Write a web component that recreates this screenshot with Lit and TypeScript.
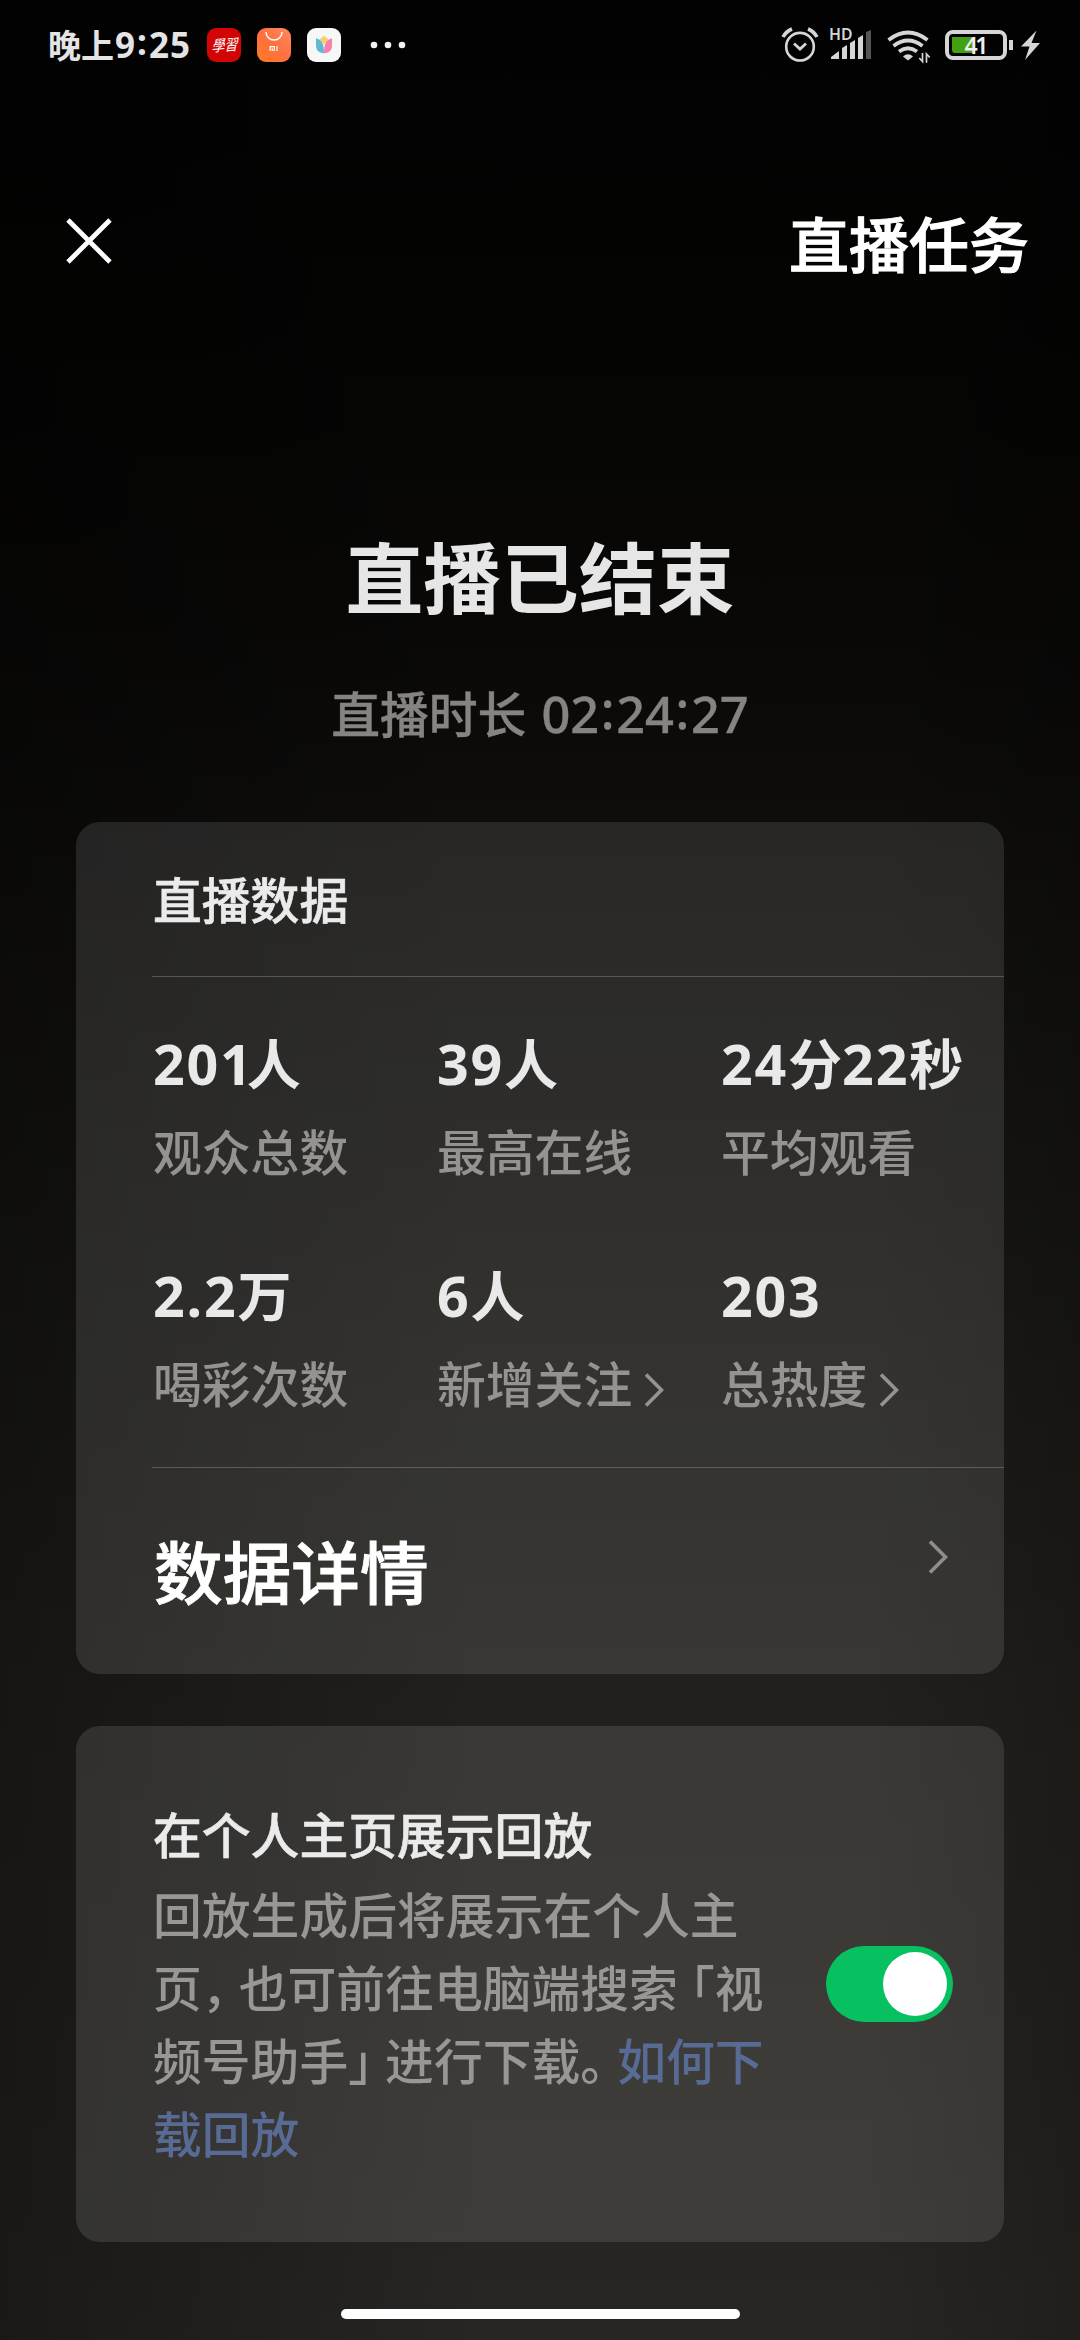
import { LitElement, html, css, svg } from "lit";
import { customElement, property } from "lit/decorators.js";

const chevron = (w: number, h: number, sw: number) => html`<svg width=${w} height=${h} viewBox="0 0 20 34" fill="none">
  ${svg`<path d="M2 1.5 17.5 17 2 32.5" stroke="currentColor" stroke-width=${sw} />`}
</svg>`;

@customElement("status-bar")
export class StatusBar extends LitElement {
  static styles = css`
    :host { display: flex; justify-content: space-between; height: 90px; padding: 0 40px 0 48px; color: #e4e4e4; box-sizing: border-box; }
    .left, .right { display: flex; align-items: center; }
    .time { font-size: 33px; font-weight: 700; line-height: 40px; white-space: nowrap; width: 159px; display: flex; align-items: baseline; }
    .digits { font-size: 35px; font-weight: 700; letter-spacing: 1px; margin-left: 1px; }
    .colon { position: relative; top: -3px; margin: 0 1px; }
    svg { display: block; flex: none; }
    .app { margin-right: 16px; }
    .brand { font-family: "Noto Sans CJK TC", sans-serif; font-weight: 400; }
    .level { font-family: "Noto Sans", sans-serif; font-weight: 600; }
  `;
  render() {
    return html`
      <div class="left">
        <div class="time"><span>晚上</span><span class="digits">9<span class="colon">:</span>25</span></div>
        <svg class="app" width="34" height="34" viewBox="0 0 34 34">
          <rect width="34" height="34" rx="9" fill="#d10505" />
          <text class="brand" transform="matrix(1 -.08 -.25 1.2 8.6 23.5)" x="-4" y="0" font-size="13" fill="#fff">學習</text>
        </svg>
        <svg class="app" width="34" height="34" viewBox="0 0 34 34">
          <defs><linearGradient id="shop" x1="0" y1="1" x2="1" y2="0"><stop offset="0" stop-color="#ff7a22" /><stop offset=".5" stop-color="#ff7040" /><stop offset="1" stop-color="#ff8a60" /></linearGradient></defs>
          <rect width="34" height="34" rx="9" fill="url(#shop)" />
          <path d="M9 4a8 8 0 0 0 16 0" fill="none" stroke="#fff" stroke-width="1.500" />
          <path d="M13.200 23v-4.300h4.100v4.300M15.300 20.500v2.500M20 18v5" fill="none" stroke="#fff" stroke-width="1.200" />
        </svg>
        <svg width="34" height="34" viewBox="0 0 34 34">
          <rect width="34" height="34" rx="9" fill="#f7f7f7" />
          <path d="M12.500 11.500 17 7.500l4.500 4-4.500 5z" fill="#f6d06c" />
          <path d="M9 10.200c6 2 8 5.500 8 15-6-.500-8-3.500-8-8z" fill="#5fb9d2" />
          <path d="M25 10.200c-6 2-8 5.500-8 15 6-.500 8-3.500 8-8z" fill="#fa7fa9" />
        </svg>
        <svg width="96" height="34" viewBox="0 0 96 34"><g fill="#f2f2f2"><circle cx="33" cy="17" r="3.300" /><circle cx="47" cy="17" r="3.300" /><circle cx="61" cy="17" r="3.300" /></g></svg>
      </div>
      <div class="right">
        <svg width="260" height="40" viewBox="780 25 260 40" fill="none" stroke="#d6d6d6">
          <circle cx="800" cy="46.700" r="13.800" stroke-width="2.600" />
          <path d="M794 43.500l6 5.500 6-5.500" stroke-width="2.800" />
          <path d="M783 37q3-5.500 9-8M817 37q-3-5.500-9-8" stroke-width="3.600" />
          <text class="level" x="829" y="40" font-size="15.500" textLength="23.500" lengthAdjust="spacingAndGlyphs" fill="#d6d6d6" stroke="none">HD</text>
          <g fill="#d6d6d6" stroke="none">
            <path d="M831 59v-2l8-6v8zM842 59V48l5-3v14zM850 59V43l5-3v19zM858 59V38l5-3v24z" />
            <path d="M866 59V32l5-2v29z" fill="#555" />
            <path d="M908 60.500l-5-4q5-4.500 10 0z" />
          </g>
          <g stroke-width="3.800">
            <path d="M888.500 40q19.500-15 39 0M893.500 46q14.500-11 29 0M899 51.500q9-6.500 18 0" />
          </g>
          <path d="M922.500 53v8.500L919.300 58M926.500 62.700V54l3.200 3.500" stroke-width="1.700" />
          <rect x="947" y="32" width="58" height="26" rx="6" stroke-width="4" />
          <path d="M952 37h20.500v16H955q-3 0-3-3z" fill="#43a012" stroke="none" />
          <text class="level" x="964.500" y="54" font-size="23" textLength="24" fill="#f0f0f0" stroke="none">41</text>
          <path d="M1011 40v10" stroke-width="4" />
          <path d="M1036.500 30.500 1021 46.500h8.500l-4.500 13.500 15-17h-8.500z" fill="#d6d6d6" stroke="none" />
        </svg>
      </div>`;
  }
}

@customElement("stat-item")
export class StatItem extends LitElement {
  @property() value = "";
  @property() label = "";
  @property({ type: Boolean }) link = false;
  static styles = css`
    :host { display: block; white-space: nowrap; }
    .value { font-size: 54px; font-weight: 700; line-height: 60px; height: 60px; color: #e9e9e9; display: flex; align-items: baseline; }
    .num { font-size: 55.5px; letter-spacing: 1.8px; }
    .one { font-size: 55.5px; letter-spacing: -5px; }
    .label { font-size: 48.8px; font-weight: 500; line-height: 60px; height: 60px; margin-top: 28px; color: #949391; display: flex; align-items: center; }
    .label svg { margin: 12px 0 0 12px; }
  `;
  render() {
    const parts = this.value.match(/1|[02-9.]+|[^\d.]+/g) ?? [];
    const kind = (p: string) => (p === "1" ? "one" : /\d/.test(p) ? "num" : "unit");
    return html`<div class="value">${parts.map((p) => html`<span class=${kind(p)}>${p}</span>`)}</div>
      <div class="label"><span>${this.label}</span>${this.link ? chevron(20, 34, 3.6) : ""}</div>`;
  }
}

@customElement("toggle-switch")
export class ToggleSwitch extends LitElement {
  static styles = css`
    :host { display: flex; align-items: center; justify-content: flex-end; box-sizing: border-box; width: 127px; height: 76px; padding: 6px; border-radius: 38px; background: #07c160; flex: none; }
    .knob { width: 64px; height: 64px; border-radius: 50%; background: #fff; }
  `;
  render() {
    return html`<div class="knob"></div>`;
  }
}

@customElement("app-root")
export class AppRoot extends LitElement {
  private stats = [
    { value: "201人", label: "观众总数" },
    { value: "39人", label: "最高在线" },
    { value: "24分22秒", label: "平均观看" },
    { value: "2.2万", label: "喝彩次数" },
    { value: "6人", label: "新增关注", link: true },
    { value: "203", label: "总热度", link: true },
  ];
  static styles = css`
    :host {
      display: flex; flex-direction: column; box-sizing: border-box; width: 1080px; height: 2340px; overflow: hidden;
      font-family: "Noto Sans", "Noto Sans CJK SC", sans-serif; color: #fff;
      background:
        linear-gradient(90deg, rgba(0,0,0,.34), rgba(0,0,0,0) 45%, rgba(0,0,0,0) 80%, rgba(0,0,0,.2)),
        linear-gradient(180deg, #020202 0, #040403 300px, #090807 620px, #100f0d 900px, #191815 1300px, #22201d 1700px, #282623 2340px);
    }
    svg { display: block; flex: none; }
    .nav { display: flex; justify-content: space-between; align-items: center; height: 150px; margin: 77px 0 183px; padding: 0 51px 0 66px; box-sizing: border-box; }
    .nav svg { margin-top: -2px; }
    .task { font-size: 60px; font-weight: 500; line-height: 80px; margin-top: 6px; -webkit-text-stroke: 1px; }
    .title { height: 100px; line-height: 100px; margin-top: 28px; text-align: center; font-size: 77.8px; font-weight: 700; color: #e6e6e6; }
    .duration { display: flex; justify-content: center; align-items: baseline; height: 70px; line-height: 70px; margin-top: 51px; font-size: 48.8px; font-weight: 500; color: #858482; -webkit-text-stroke: .4px; }
    .clock { font-size: 50.5px; margin-left: 15px; display: flex; }
    .colon { position: relative; top: -4px; width: 17px; text-align: center; }
    .card { margin: 0 76px; border-radius: 24px; background: rgba(255,255,255,.108); box-sizing: border-box; }
    .data { height: 852px; margin-top: 73px; padding-left: 76px; display: flex; flex-direction: column; }
    .heading { height: 154px; line-height: 157px; font-size: 48.8px; font-weight: 500; color: #ebebeb; padding-left: 1px; border-bottom: 1px solid rgba(255,255,255,.21); -webkit-text-stroke: .6px; }
    .stats { height: 491px; box-sizing: border-box; display: grid; grid-template-columns: 284px 284px 1fr; grid-template-rows: 148px 148px; row-gap: 84px; padding: 57px 0 0 1px; border-bottom: 1px solid rgba(255,255,255,.21); }
    .detail { flex: 1; display: flex; align-items: flex-start; justify-content: space-between; padding: 55px 56px 0 2px; }
    .more { font-size: 68.7px; font-weight: 500; line-height: 100px; -webkit-text-stroke: .9px; }
    .detail svg { color: #8f8d8a; margin-top: 17px; }
    .replay { height: 516px; margin-top: 52px; padding: 0 51px 0 77px; display: flex; align-items: center; justify-content: space-between; }
    .copy { width: 625px; }
    .name { font-size: 48.8px; line-height: 72px; font-weight: 500; color: #ebebeb; margin-top: 2px; -webkit-text-stroke: .6px; }
    .desc { font-size: 48.8px; line-height: 73px; font-weight: 500; color: #989794; margin-top: 8px; white-space: nowrap; }
    .link { color: #576b95; }
    .close { font-feature-settings: "halt"; margin-right: 12.500px; }
    .open { font-feature-settings: "halt"; margin-left: 12.500px; }
    .home { width: 399px; height: 10px; border-radius: 5px; background: #fff; margin: 67px auto 0; }
  `;
  render() {
    return html`
      <status-bar></status-bar>
      <div class="nav">
        <svg width="46" height="46" viewBox="0 0 46 46" fill="none" stroke="#fff" stroke-width="4.800"><path d="M2 2 44 44M44 2 2 44" /></svg>
        <div class="task">直播任务</div>
      </div>
      <div class="title">直播已结束</div>
      <div class="duration"><span>直播时长</span><span class="clock">02<span class="colon">:</span>24<span class="colon">:</span>27</span></div>
      <div class="card data">
        <div class="heading">直播数据</div>
        <div class="stats">${this.stats.map((s) => html`<stat-item .value=${s.value} .label=${s.label} .link=${!!s.link}></stat-item>`)}</div>
        <div class="detail"><div class="more">数据详情</div>${chevron(20, 34, 3.6)}</div>
      </div>
      <div class="card replay">
        <div class="copy">
          <div class="name">在个人主页展示回放</div>
          <div class="desc">回放生成后将展示在个人主<br />页<span class="close">，</span>也可前往电脑端搜索<span class="open">「</span>视<br />频号助手<span class="close">」</span>进行下载<span class="close">。</span><span class="link">如何下<br />载回放</span></div>
        </div>
        <toggle-switch></toggle-switch>
      </div>
      <div class="home"></div>`;
  }
}
